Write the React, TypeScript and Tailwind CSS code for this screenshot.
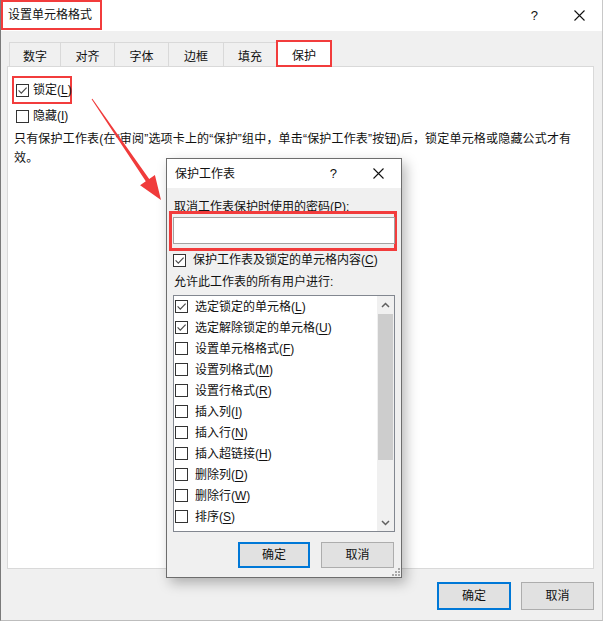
import React from "react";

const RED = "border-[#f23c3c]";

function Check({ checked, light }: { checked?: boolean; light?: boolean }) {
  return (
    <span
      className={`w-[13px] h-[13px] shrink-0 border bg-white flex items-center justify-center ${
        light ? "border-[#555]" : "border-[#333]"
      }`}
    >
      {checked && (
        <svg width="11" height="11" viewBox="0 0 11 11">
          <path d="M1.6 5.4 L4.3 8.1 L9.6 2.6" stroke="#4a4a4a" strokeWidth="1.2" fill="none" />
        </svg>
      )}
    </span>
  );
}

function XIcon() {
  return (
    <svg width="11" height="11" viewBox="0 0 11 11">
      <path d="M0.5 0.5 L10.5 10.5 M10.5 0.5 L0.5 10.5" stroke="#111" strokeWidth="1.1" fill="none" />
    </svg>
  );
}

function K({ children }: { children: React.ReactNode }) {
  return <span className="underline underline-offset-[2px]">{children}</span>;
}

const items: { pre: string; key: string; checked?: boolean }[] = [
  { pre: "选定锁定的单元格", key: "L", checked: true },
  { pre: "选定解除锁定的单元格", key: "U", checked: true },
  { pre: "设置单元格格式", key: "F" },
  { pre: "设置列格式", key: "M" },
  { pre: "设置行格式", key: "R" },
  { pre: "插入列", key: "I" },
  { pre: "插入行", key: "N" },
  { pre: "插入超链接", key: "H" },
  { pre: "删除列", key: "D" },
  { pre: "删除行", key: "W" },
  { pre: "排序", key: "S" },
];

const tabs = [
  { t: "数字", w: "w-[51px]" },
  { t: "对齐", w: "w-[54px]" },
  { t: "字体", w: "w-[54px]" },
  { t: "边框", w: "w-[55px]" },
  { t: "填充", w: "w-[53px]" },
];

const Q = ({ c }: { c: string }) => <span>{c}</span>;

export default function App() {
  return (
    <div className="w-[603px] h-[621px] relative overflow-hidden bg-[#f0f0f0] border-l border-l-[#7a7a7a] border-r border-r-[#c8c8c8] border-b border-b-[#bdbdbd] flex flex-col text-[12px] text-[#111] font-[family-name:'Liberation_Sans','Noto_Sans_CJK_SC',sans-serif]">
      {/* title bar */}
      <div className="h-[31px] bg-white flex items-start justify-between shrink-0">
        <div className={`h-[30px] w-[101px] border-2 ${RED} flex items-center pl-[5px] whitespace-nowrap`}>
          设置单元格格式
        </div>
        <div className="h-[31px] flex items-center gap-[36px] pr-[17px]">
          <span className="text-[13px]">?</span>
          <XIcon />
        </div>
      </div>

      {/* tabs */}
      <div className="h-[24px] mt-[11px] flex items-end pl-[8px] shrink-0">
        {tabs.map((t) => (
          <div
            key={t.t}
            className={`${t.w} h-[24px] border-t border-l border-[#d9d9d9] flex justify-center items-center pt-[4px]`}
          >
            {t.t}
          </div>
        ))}
        <div className={`relative z-10 -mb-px w-[56px] h-[27px] bg-white border-2 ${RED} flex justify-center items-center pt-[4px]`}>
          保护
        </div>
      </div>

      {/* panel */}
      <div className="ml-[6px] w-[587px] h-[503px] shrink-0 bg-white border border-[#d9d9d9] pl-[4px] pt-[9px] flex flex-col items-start">
        <div className={`w-[60px] h-[28px] border-2 ${RED} flex items-center pl-[2px] gap-[4px] whitespace-nowrap`}>
          <Check checked />
          <span>
            锁定(<K>L</K>)
          </span>
        </div>
        <div className="mt-[2px] h-[20px] ml-[4px] flex items-center gap-[4px] whitespace-nowrap">
          <Check />
          <span>
            隐藏(<K>I</K>)
          </span>
        </div>
        <div className="mt-[4px] ml-[2px] leading-[19px] whitespace-nowrap tracking-[0.18px]">
          只有保护工作表(在<Q c="“" />审阅<Q c="”" />选项卡上的<Q c="“" />保护<Q c="”" />组中，单击<Q c="“" />保护工作表
          <Q c="”" />按钮)后，锁定单元格或隐藏公式才有
          <br />
          效。
        </div>
      </div>

      {/* bottom buttons */}
      <div className="flex justify-end gap-[10px] mt-[13px] pr-[8px] shrink-0">
        <div className="w-[74px] h-[28px] border-2 border-[#0078d7] bg-[#e1e1e1] flex items-center justify-center">
          确定
        </div>
        <div className="w-[73px] h-[28px] border border-[#adadad] bg-[#e1e1e1] flex items-center justify-center">
          取消
        </div>
      </div>

      {/* annotation arrow */}
      <svg className="absolute -left-px top-0 pointer-events-none" width="603" height="621" viewBox="0 0 603 621">
        <polygon
          points="92.4,98.7 149.2,179.1 154.9,175.1 161,200 140.1,185.3 145.8,181.3 91.6,99.3"
          fill="#f03b3b"
        />
      </svg>

      {/* inner dialog */}
      <div className="absolute left-[165px] top-[158px] w-[236px] h-[420px] border border-[#6d6d6d] bg-[#f0f0f0] shadow-[4px_5px_12px_rgba(0,0,0,0.28)] flex flex-col">
        <div className="h-[29px] bg-white flex items-center justify-between pl-[8px] pr-[17px] shrink-0">
          <span>保护工作表</span>
          <div className="flex items-center gap-[36px]">
            <span className="text-[13px]">?</span>
            <XIcon />
          </div>
        </div>
        <div className="flex flex-col items-start">
          <div className="ml-[7px] mt-[12px] h-[14px] leading-[14px] whitespace-nowrap">
            取消工作表保护时使用的密码(<K>P</K>):
          </div>
          <div className={`ml-[2px] mt-[-3px] w-[228px] h-[40px] border-[3px] ${RED} pl-[1px] pt-[3px]`}>
            <div className="w-[222px] h-[27px] bg-white border border-[#a3a3a3]" />
          </div>
          <div className="ml-[6px] mt-[1px] h-[16px] flex items-center gap-[7px] whitespace-nowrap">
            <Check checked />
            <span>
              保护工作表及锁定的单元格内容(<K>C</K>)
            </span>
          </div>
          <div className="ml-[7px] mt-[6px] h-[16px] flex items-center whitespace-nowrap">
            允许此工作表的所有用户进行:
          </div>
          <div className="ml-[6px] mt-[5px] w-[222px] h-[237px] border border-[#828790] bg-white flex">
            <div className="flex-1 flex flex-col">
              {items.map((it) => (
                <div key={it.key} className="h-[21px] flex items-center pl-[1px] gap-[7px] whitespace-nowrap">
                  <Check checked={it.checked} />
                  <span>
                    {it.pre}(<K>{it.key}</K>)
                  </span>
                </div>
              ))}
            </div>
            <div className="w-[17px] bg-[#f0f0f0] flex flex-col">
              <div className="h-[17px] flex items-center justify-center">
                <svg width="9" height="6" viewBox="0 0 9 6">
                  <path d="M1 5 L4.5 1.5 L8 5" stroke="#606060" strokeWidth="1.5" fill="none" />
                </svg>
              </div>
              <div className="mt-[1px] mx-[1px] h-[146px] bg-[#cdcdcd]" />
              <div className="flex-1" />
              <div className="h-[17px] flex items-center justify-center">
                <svg width="9" height="6" viewBox="0 0 9 6">
                  <path d="M1 1 L4.5 4.5 L8 1" stroke="#606060" strokeWidth="1.5" fill="none" />
                </svg>
              </div>
            </div>
          </div>
          <div className="self-stretch mt-[10px] flex justify-end gap-[11px] pr-[7px]">
            <div className="w-[72px] h-[26px] border-2 border-[#0078d7] bg-[#e1e1e1] flex items-center justify-center">
              确定
            </div>
            <div className="w-[73px] h-[26px] border border-[#adadad] bg-[#e1e1e1] flex items-center justify-center">
              取消
            </div>
          </div>
        </div>
        <svg className="absolute right-[1px] bottom-[1px]" width="8" height="8" viewBox="0 0 8 8">
          <rect x="6" y="0" width="2" height="2" fill="#a8a8a8" />
          <rect x="3" y="3" width="2" height="2" fill="#a8a8a8" />
          <rect x="6" y="3" width="2" height="2" fill="#a8a8a8" />
          <rect x="0" y="6" width="2" height="2" fill="#a8a8a8" />
          <rect x="3" y="6" width="2" height="2" fill="#a8a8a8" />
          <rect x="6" y="6" width="2" height="2" fill="#a8a8a8" />
        </svg>
      </div>
    </div>
  );
}
